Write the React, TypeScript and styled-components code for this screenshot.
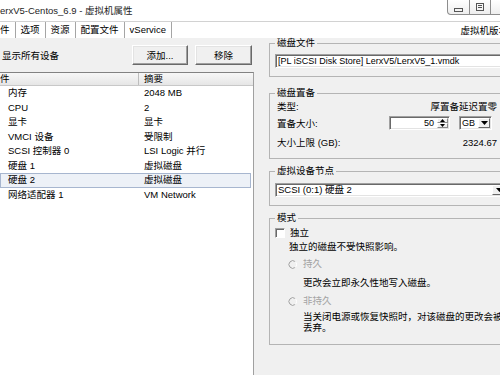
import styled, { createGlobalStyle } from 'styled-components';

const GlobalStyle = createGlobalStyle`
  html, body {
    margin: 0;
    padding: 0;
    width: 500px;
    height: 375px;
    overflow: hidden;
    background: #f0f0f0;
  }
  body {
    font-family: "Liberation Sans", "Noto Sans CJK SC", sans-serif;
    font-size: 9.5px;
    color: #000;
  }
  * { box-sizing: border-box; }
`;

const Window = styled.div`
  width: 520px;
  height: 375px;
  display: flex;
  flex-direction: column;
`;

const TitleBar = styled.div`
  height: 22px;
  flex-shrink: 0;
  background: #fff;
  border-bottom: 1px solid #d2d2d2;
  display: flex;
  justify-content: space-between;
  align-items: flex-start;
`;

const Title = styled.div`
  line-height: 12px;
  padding-top: 5px;
  color: #1e1e1e;
`;

const WinButtons = styled.div`
  display: flex;
  height: 15px;
  margin-right: 8px;
  border: 1px solid #8d8d8d;
  border-top: none;
  border-radius: 0 0 0 4px;
  background: linear-gradient(#ffffff, #eeeeee);
  overflow: hidden;
`;

const WinButton = styled.div<{ $align?: string }>`
  width: 21px;
  display: flex;
  justify-content: center;
  align-items: ${({ $align }) => $align || 'center'};
  padding-bottom: 1px;
  & + & {
    border-left: 1px solid #8d8d8d;
  }
`;

const TabStrip = styled.div`
  height: 16px;
  flex-shrink: 0;
  background: #fff;
  display: flex;
  justify-content: space-between;
  align-items: stretch;
`;

const Tabs = styled.div`
  display: flex;
  align-items: stretch;
`;

const Tab = styled.div<{ $first?: boolean }>`
  padding: 0 5px;
  padding-left: ${({ $first }) => ($first ? '0' : '5px')};
  line-height: 15px;
  border-left: ${({ $first }) => ($first ? 'none' : '1px solid #a5a5a5')};
  &:last-child {
    border-right: 1px solid #a5a5a5;
  }
`;

const VersionText = styled.div`
  line-height: 17px;
  margin-right: 12px;
`;

const Body = styled.div`
  flex: 1;
  min-height: 0;
  display: flex;
`;

const LeftPane = styled.div`
  width: 254px;
  flex-shrink: 0;
  display: flex;
  flex-direction: column;
`;

const Toolbar = styled.div`
  height: 34px;
  flex-shrink: 0;
  display: flex;
  align-items: center;
  padding: 0 2px 0 2px;
  gap: 7px;
`;

const ToolbarLabel = styled.div`
  flex: 1;
`;

const PushButton = styled.div<{ $w: number }>`
  width: ${({ $w }) => $w}px;
  height: 20px;
  display: flex;
  align-items: center;
  justify-content: center;
  background: #f0f0f0;
  border: 1px solid;
  border-color: #ffffff #696969 #696969 #ffffff;
  box-shadow: inset -1px -1px #a0a0a0, inset 1px 1px #e3e3e3;
`;

const DeviceList = styled.div`
  flex: 1;
  background: #fff;
  border-top: 1px solid #828282;
  border-right: 1px solid #a0a0a0;
`;

const ListHeader = styled.div`
  height: 13px;
  display: grid;
  grid-template-columns: 139px 1fr;
  background: linear-gradient(#f7f7f7, #e6e6e6);
  border-bottom: 1px solid #c8c8c8;
  line-height: 12px;
`;

const HeaderCell = styled.div<{ $pl: number }>`
  padding-left: ${({ $pl }) => $pl}px;
  &:first-child {
    border-right: 1px solid #bdbdbd;
  }
`;

const ListRow = styled.div<{ $selected?: boolean }>`
  height: 14.5px;
  display: grid;
  grid-template-columns: 139px 1fr;
  align-items: center;
  line-height: 12px;
  ${({ $selected }) =>
    $selected &&
    `
    background: #edf1f7;
    box-shadow: inset 0 0 0 1px #a7b6cf;
    margin-right: 2px;
  `}
`;

const NameCell = styled.div`
  padding-left: 8px;
  white-space: nowrap;
`;

const SummaryCell = styled.div`
  padding-left: 5px;
  white-space: nowrap;
`;

const RightPane = styled.div`
  width: 266px;
  flex-shrink: 0;
  padding-left: 15px;
  padding-right: 5px;
`;

const GroupBox = styled.fieldset<{ $mt: number; $pb: number }>`
  margin: ${({ $mt }) => $mt}px 0 0 0;
  padding: 0 6px ${({ $pb }) => $pb}px 5px;
  border: 1px solid #b4b4b4;
  min-width: 0;
`;

const Legend = styled.legend`
  padding: 0 2px;
  line-height: 10px;
  height: 10px;
`;

const SunkenField = styled.div<{ $mt: number; $w?: number }>`
  margin-top: ${({ $mt }) => $mt}px;
  width: ${({ $w }) => ($w ? `${$w}px` : 'auto')};
  height: 14px;
  background: #fff;
  border: 1px solid;
  border-color: #a0a0a0 #ffffff #ffffff #a0a0a0;
  box-shadow: inset 1px 1px #696969, inset -1px -1px #e3e3e3;
  display: flex;
  align-items: center;
  line-height: 12px;
  white-space: nowrap;
  overflow: hidden;
`;

const FieldText = styled.div<{ $small?: boolean; $right?: boolean }>`
  flex: 1;
  padding: 0 3px 0 2px;
  font-size: ${({ $small }) => ($small ? '9px' : '9.5px')};
  text-align: ${({ $right }) => ($right ? 'right' : 'left')};
`;

const ProvisionGrid = styled.div`
  padding: 0 11px 0 2px;
`;

const PropRow = styled.div<{ $h: number }>`
  height: ${({ $h }) => $h}px;
  display: flex;
  align-items: center;
  justify-content: space-between;
  white-space: nowrap;
`;

const Controls = styled.div`
  display: flex;
  gap: 9px;
  margin-right: 5px;
`;

const SpinButtons = styled.div`
  width: 11px;
  align-self: stretch;
  display: flex;
  flex-direction: column;
  margin: 1px 1px 1px 0;
`;

const SpinHalf = styled.div`
  flex: 1;
  display: flex;
  align-items: center;
  justify-content: center;
  background: #f0f0f0;
  border: 1px solid;
  border-color: #ffffff #8a8a8a #8a8a8a #ffffff;
`;

const DropButton = styled.div`
  width: 14px;
  align-self: stretch;
  margin: 1px 1px 1px 0;
  display: flex;
  align-items: center;
  justify-content: center;
  background: #f0f0f0;
  border: 1px solid;
  border-color: #ffffff #696969 #696969 #ffffff;
`;

const CheckRow = styled.div<{ $mt: number; $pl: number; $gap: number; $muted?: boolean }>`
  margin-top: ${({ $mt }) => $mt}px;
  padding-left: ${({ $pl }) => $pl}px;
  height: 14px;
  display: flex;
  align-items: center;
  gap: ${({ $gap }) => $gap}px;
  color: ${({ $muted }) => ($muted ? '#a3a3a3' : '#000')};
  line-height: 12px;
`;

const CheckBox = styled.div`
  width: 10px;
  height: 10px;
  flex-shrink: 0;
  background: #fff;
  border: 1px solid;
  border-color: #a0a0a0 #ffffff #ffffff #a0a0a0;
  box-shadow: inset 1px 1px #696969;
`;

const Note = styled.div<{ $mt: number; $pl: number; $lh: number }>`
  margin-top: ${({ $mt }) => $mt}px;
  padding-left: ${({ $pl }) => $pl}px;
  line-height: ${({ $lh }) => $lh}px;
  white-space: nowrap;
`;

const devices = [
  { name: '内存', summary: '2048 MB' },
  { name: 'CPU', summary: '2' },
  { name: '显卡', summary: '显卡' },
  { name: 'VMCI 设备', summary: '受限制' },
  { name: 'SCSI 控制器 0', summary: 'LSI Logic 并行' },
  { name: '硬盘 1', summary: '虚拟磁盘' },
  { name: '硬盘 2', summary: '虚拟磁盘', selected: true },
  { name: '网络适配器 1', summary: 'VM Network' },
];

const tabs = ['件', '选项', '资源', '配置文件', 'vService'];

const Radio = () => (
  <svg width="9" height="9" viewBox="0 0 9 9">
    <path d="M7.2 1.6 A3.8 3.8 0 1 0 7.2 7.4" fill="none" stroke="#a0a0a0" strokeWidth="1" />
    <path d="M7.2 1.6 A3.8 3.8 0 0 1 7.2 7.4" fill="none" stroke="#ffffff" strokeWidth="1" />
  </svg>
);

const Tri = ({ up, size = 5, color = '#000' }: { up?: boolean; size?: number; color?: string }) => (
  <svg width={size} height={Math.ceil(size / 2)} viewBox={`0 0 ${size} ${Math.ceil(size / 2)}`}>
    {up ? (
      <polygon points={`0,${Math.ceil(size / 2)} ${size},${Math.ceil(size / 2)} ${size / 2},0`} fill={color} />
    ) : (
      <polygon points={`0,0 ${size},0 ${size / 2},${Math.ceil(size / 2)}`} fill={color} />
    )}
  </svg>
);

export default function App() {
  return (
    <>
      <GlobalStyle />
      <Window>
        <TitleBar>
          <Title>erxV5-Centos_6.9 - 虚拟机属性</Title>
          <WinButtons>
            <WinButton $align="flex-end">
              <svg width="9" height="5" viewBox="0 0 9 5">
                <rect x="0.5" y="0.5" width="8" height="3" fill="none" stroke="#555" />
              </svg>
            </WinButton>
            <WinButton>
              <svg width="8" height="8" viewBox="0 0 8 8">
                <rect x="0.5" y="0.5" width="7" height="7" fill="none" stroke="#555" />
                <line x1="2" y1="4.5" x2="6" y2="4.5" stroke="#555" />
                <line x1="2" y1="2.5" x2="6" y2="2.5" stroke="#555" />
              </svg>
            </WinButton>
            <WinButton />
          </WinButtons>
        </TitleBar>

        <TabStrip>
          <Tabs>
            {tabs.map((t, i) => (
              <Tab key={t} $first={i === 0}>
                {t}
              </Tab>
            ))}
          </Tabs>
          <VersionText>虚拟机版本</VersionText>
        </TabStrip>

        <Body>
          <LeftPane>
            <Toolbar>
              <ToolbarLabel>显示所有设备</ToolbarLabel>
              <PushButton $w={56}>添加...</PushButton>
              <PushButton $w={57}>移除</PushButton>
            </Toolbar>
            <DeviceList>
              <ListHeader>
                <HeaderCell $pl={0}>件</HeaderCell>
                <HeaderCell $pl={5}>摘要</HeaderCell>
              </ListHeader>
              {devices.map((d) => (
                <ListRow key={d.name} $selected={d.selected}>
                  <NameCell>{d.name}</NameCell>
                  <SummaryCell>{d.summary}</SummaryCell>
                </ListRow>
              ))}
            </DeviceList>
          </LeftPane>

          <RightPane>
            <GroupBox $mt={0} $pb={8}>
              <Legend>磁盘文件</Legend>
              <SunkenField $mt={6}>
                <FieldText $small>[PL iSCSI Disk Store] LerxV5/LerxV5_1.vmdk</FieldText>
              </SunkenField>
            </GroupBox>

            <GroupBox $mt={11} $pb={5}>
              <Legend>磁盘置备</Legend>
              <ProvisionGrid>
                <PropRow $h={16}>
                  <span>类型:</span>
                  <span>厚置备延迟置零</span>
                </PropRow>
                <PropRow $h={17}>
                  <span>置备大小:</span>
                  <Controls>
                    <SunkenField $mt={0} $w={61}>
                      <FieldText $right $small>50</FieldText>
                      <SpinButtons>
                        <SpinHalf>
                          <Tri up size={5} />
                        </SpinHalf>
                        <SpinHalf>
                          <Tri size={5} />
                        </SpinHalf>
                      </SpinButtons>
                    </SunkenField>
                    <SunkenField $mt={0} $w={33}>
                      <FieldText $small>GB</FieldText>
                      <DropButton>
                        <Tri size={7} />
                      </DropButton>
                    </SunkenField>
                  </Controls>
                </PropRow>
                <PropRow $h={22}>
                  <span>大小上限 (GB):</span>
                  <span>2324.67</span>
                </PropRow>
              </ProvisionGrid>
            </GroupBox>

            <GroupBox $mt={7} $pb={8}>
              <Legend>虚拟设备节点</Legend>
              <SunkenField $mt={7}>
                <FieldText>SCSI (0:1) 硬盘 2</FieldText>
                <DropButton>
                  <Tri size={7} />
                </DropButton>
              </SunkenField>
            </GroupBox>

            <GroupBox $mt={7} $pb={11}>
              <Legend>模式</Legend>
              <CheckRow $mt={3} $pl={0} $gap={5}>
                <CheckBox />
                <span>独立</span>
              </CheckRow>
              <Note $mt={1} $pl={14} $lh={12}>
                独立的磁盘不受快照影响。
              </Note>
              <CheckRow $mt={4} $pl={13} $gap={6} $muted>
                <Radio />
                <span>持久</span>
              </CheckRow>
              <Note $mt={6} $pl={28} $lh={12}>
                更改会立即永久性地写入磁盘。
              </Note>
              <CheckRow $mt={5} $pl={13} $gap={6} $muted>
                <Radio />
                <span>非持久</span>
              </CheckRow>
              <Note $mt={4} $pl={28} $lh={10.5}>
                当关闭电源或恢复快照时，对该磁盘的更改会被
                <br />
                丢弃。
              </Note>
            </GroupBox>
          </RightPane>
        </Body>
      </Window>
    </>
  );
}
